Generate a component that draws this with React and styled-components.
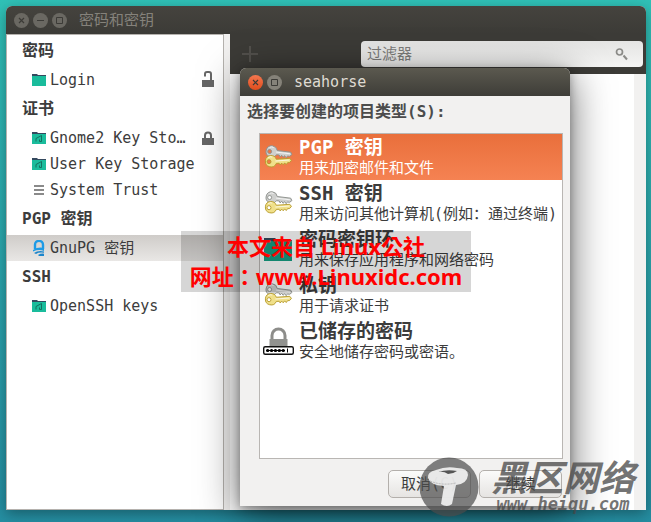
import React, { useState } from 'react'
import styled, { createGlobalStyle } from 'styled-components'

const sidebarGroups = [
    { title: '密码', items: [{ name: 'Login', icon: 'folder', lock: 'open' }] },
    {
        title: '证书',
        items: [
            { name: 'Gnome2 Key Storage', icon: 'home', lock: 'closed' },
            { name: 'User Key Storage', icon: 'home' },
            { name: 'System Trust', icon: 'lines' },
        ],
    },
    { title: 'PGP 密钥', items: [{ name: 'GnuPG 密钥', icon: 'gnupg' }] },
    { title: 'SSH', items: [{ name: 'OpenSSH keys', icon: 'home' }] },
]

const itemTypes = [
    { title: 'PGP 密钥', text: '用来加密邮件和文件', icon: 'keys' },
    { title: 'SSH 密钥', text: '用来访问其他计算机(例如：通过终端)', icon: 'keys' },
    { title: '密码密钥环', text: '用来保存应用程序和网络密码', icon: 'keyring' },
    { title: '私钥', text: '用于请求证书', icon: 'keys' },
    { title: '已储存的密码', text: '安全地储存密码或密语。', icon: 'stored' },
]

function SidebarIcon({ type }) {
    if (type === 'lines') {
        return (
            <svg width="16" height="16" viewBox="0 0 16 16">
                <path d="M3 3h10v2H3zM3 7h10v2H3zM3 11h10v2H3z" fill="#8a8a8a" />
            </svg>
        )
    }
    if (type === 'gnupg') {
        return (
            <svg width="16" height="16" viewBox="0 0 16 16">
                <path d="M4 9V4.800a4 4 0 0 1 8 0V9" fill="none" stroke="#1e9be6" strokeWidth="2.400" />
                <path d="M2 10Q7 6.500 13 8V11Q8 9 2 11.500z" fill="#1e9be6" />
                <path d="M3 13q4-2.800 10-1.500v1.300Q8 12 5 14zM7 15q3-1.800 6-1.300V16H8z" fill="#1c86cc" />
            </svg>
        )
    }
    return (
        <svg width="16" height="16" viewBox="0 0 16 16">
            <path d="M1 2h5l1 1h8v3H1z" fill="#34495e" />
            <path d="M1 4h14v10H1z" fill="#1abc9c" />
            {type === 'home' && (
                <path d="M5 11.500V8.500L10.500 5.500V11.500H8.500V9.500" fill="none" stroke="#13705f" strokeWidth="1" />
            )}
        </svg>
    )
}

function LockIcon({ open }) {
    return (
        <svg width="14" height="18" viewBox="0 0 14 18">
            <path d="M1 9h12v7H1z" fill="#666" />
            {open ? (
                <path d="M4 5.500V3Q4 1 6 1h2q2 0 2 2v6.500" fill="none" stroke="#666" strokeWidth="2" />
            ) : (
                <path d="M4 9.500V6.500a3 3 0 0 1 6 0V9.500" fill="none" stroke="#666" strokeWidth="2" />
            )}
        </svg>
    )
}

function Key({ fill, edge }) {
    return (
        <g fill={fill} stroke={edge} strokeWidth="0.900">
            <path
                fillRule="evenodd"
                d="M6.500 1a5.700 5.700 0 1 0 5.200 8.300H14.500l1 1.800 1.500-1.800 1.500 1.800 1.500-1.800 1.500 1.800 1.500-1.800H25l2-2-1.500-2.200H12A5.700 5.700 0 0 0 6.500 1zM4.500 5a2 2 0 1 1 0 4 2 2 0 0 1 0-4z"
            />
            <path d="M11 6.800h14" stroke="#fff" strokeOpacity="0.800" />
            <path d="M4 3q2-1.500 4-.4" stroke="#fff" strokeOpacity="0.800" fill="none" />
        </g>
    )
}

function TypeIcon({ type }) {
    if (type === 'keyring') {
        return (
            <svg width="32" height="32" viewBox="0 0 32 32">
                <path d="M2 5h11l2 2h15v5H2z" fill="#34495e" />
                <path d="M2 8h28v20H2z" fill="#16a085" />
            </svg>
        )
    }
    if (type === 'stored') {
        return (
            <svg width="32" height="32" viewBox="0 0 32 32">
                <path d="M10 15V10.500a6.500 6.500 0 0 1 13 0v4.500" fill="none" stroke="#8d8d8a" strokeWidth="3" />
                <path d="M7.500 14h18v8h-18z" fill="#91928f" />
                <rect x="1.700" y="21.700" width="29.600" height="7.600" rx="1.500" fill="#fff" stroke="#111" strokeWidth="1.400" />
                <path d="M5.500 25.500h18" stroke="#000" strokeWidth="3" strokeLinecap="round" strokeDasharray="0.300 3.600" />
                <path d="M4 25.500h19" stroke="#000" />
                <path d="M25.500 23.500v4" stroke="#000" />
            </svg>
        )
    }
    return (
        <svg width="32" height="32" viewBox="0 0 32 32">
            <g transform="translate(4 3) rotate(7)"><Key fill="#cfd0ce" edge="#8e918d" /></g>
            <g transform="translate(2 14) rotate(-4)"><Key fill="#f0e08a" edge="#b79b2c" /></g>
        </svg>
    )
}

function WindowIcon({ type }) {
    return (
        <svg width="7" height="7" viewBox="0 0 7 7" fill="none" stroke="currentColor">
            {type === 'close' && <path d="M1 1l5 5M6 1L1 6" strokeWidth="1.200" />}
            {type === 'min' && <path d="M0 3.500h7" />}
            {type === 'max' && <path d="M.5.5h6v6h-6z" />}
        </svg>
    )
}

export default function App() {
    const [place, setPlace] = useState('GnuPG 密钥')
    const [selected, setSelected] = useState(0)
    const [filter, setFilter] = useState('')

    return (
        <Desktop>
            <GlobalStyle />
            <MainWindow>
                <TitleBar>
                    <WindowButton aria-label="关闭"><WindowIcon type="close" /></WindowButton>
                    <WindowButton aria-label="最小化"><WindowIcon type="min" /></WindowButton>
                    <WindowButton aria-label="最大化"><WindowIcon type="max" /></WindowButton>
                    <WindowTitle>密码和密钥</WindowTitle>
                </TitleBar>
                <WindowBody>
                    <Sidebar>
                        {sidebarGroups.map((group) => (
                            <React.Fragment key={group.title}>
                                <GroupTitle>{group.title}</GroupTitle>
                                {group.items.map((item) => (
                                    <Place
                                        key={item.name}
                                        $active={place === item.name}
                                        onClick={() => setPlace(item.name)}
                                    >
                                        <SidebarIcon type={item.icon} />
                                        <PlaceName>{item.name}</PlaceName>
                                        {item.lock && (
                                            <LockSlot><LockIcon open={item.lock === 'open'} /></LockSlot>
                                        )}
                                    </Place>
                                ))}
                            </React.Fragment>
                        ))}
                    </Sidebar>
                    <Content>
                        <Toolbar>
                            <AddButton aria-label="添加">
                                <svg width="16" height="16" viewBox="0 0 16 16">
                                    <path d="M8 0v16M0 8h16" stroke="#53514d" strokeWidth="2" />
                                </svg>
                            </AddButton>
                            <SearchBox>
                                <SearchInput
                                    aria-label="过滤器"
                                    placeholder="过滤器"
                                    value={filter}
                                    onChange={(e) => setFilter(e.target.value)}
                                />
                                <svg width="16" height="16" viewBox="0 0 16 16" fill="none" stroke="#8b8b88">
                                    <circle cx="6.500" cy="6" r="3" strokeWidth="1.700" />
                                    <path d="M10.500 9.500l3.500 4" strokeWidth="2" />
                                </svg>
                            </SearchBox>
                        </Toolbar>
                        <KeyArea />
                    </Content>
                </WindowBody>
            </MainWindow>

            <Dialog role="dialog" aria-label="seahorse">
                <DialogBar>
                    <WindowButton $close aria-label="关闭"><WindowIcon type="close" /></WindowButton>
                    <WindowButton $light aria-label="最大化"><WindowIcon type="max" /></WindowButton>
                    <DialogTitle>seahorse</DialogTitle>
                </DialogBar>
                <DialogBody>
                    <DialogLabel>选择要创建的项目类型(S):</DialogLabel>
                    <TypeList>
                        {itemTypes.map((type, i) => (
                            <TypeRow key={type.title} $active={selected === i} onClick={() => setSelected(i)}>
                                <TypeIcon type={type.icon} />
                                <TypeInfo>
                                    <TypeTitle>{type.title}</TypeTitle>
                                    <TypeText>{type.text}</TypeText>
                                </TypeInfo>
                            </TypeRow>
                        ))}
                    </TypeList>
                    <DialogActions>
                        <ActionButton>取消(C)</ActionButton>
                        <ActionButton>继续</ActionButton>
                    </DialogActions>
                </DialogBody>
            </Dialog>

            <SourceNote>
                <span>本文来自 Linux公社</span>
                <span>网址：www.Linuxidc.com</span>
            </SourceNote>

            <SiteMark>
                <svg width="60" height="60" viewBox="0 0 60 60">
                    <circle cx="30" cy="30" r="29.500" fill="#4c4c4c" fillOpacity="0.700" />
                    <path
                        d="M9 21Q8 15 17 13Q27 9 38 11Q49 11 49 18Q48 27 37 28L33 47Q28 51 22 47L25 29Q11 28 9 21z"
                        fill="#f7f7f7"
                        fillOpacity="0.880"
                    />
                    <path d="M19 15q9-3 19-1q-4 3-9 3q-4-3-10-2z" fill="#555" />
                    <path d="M11 24q12 5 26 2" fill="none" stroke="#b5b5b5" strokeDasharray="2 1" />
                </svg>
                <SiteText>
                    <SiteName>黑区网络</SiteName>
                    <SiteUrl>www.heiqu.com</SiteUrl>
                </SiteText>
            </SiteMark>
        </Desktop>
    )
}

const GlobalStyle = createGlobalStyle`
* {
    box-sizing: border-box;
}
body {
    margin: 0;
}
body, button, input {
    font-family: "DejaVu Sans Mono", "Noto Sans CJK SC", monospace;
    font-size: 15px;
    color: #3c3c3c;
}
button {
    border: none;
    padding: 0;
    background: none;
}
svg {
    display: block;
    flex: none;
}
`
const Desktop = styled.div`
position: relative;
display: flex;
min-height: 100vh;
padding: 6px 5px 12px 6px;
overflow: hidden;
background: linear-gradient(#30c1b7, #2ba6ad 50%, #258ea2);
`
const MainWindow = styled.div`
flex: 1;
display: flex;
flex-direction: column;
border-radius: 6px 6px 0 0;
background-color: #f2f1f0;
box-shadow: 0 4px 14px rgba(0, 0, 0, 0.35);
`
const TitleBar = styled.header`
display: flex;
align-items: center;
gap: 4px;
height: 28px;
padding: 0 8px;
border-radius: 6px 6px 0 0;
background: linear-gradient(#45433e, #3c3b37);
`
const WindowButton = styled.button`
display: flex;
align-items: center;
justify-content: center;
width: 15px;
height: 15px;
border-radius: 50%;
color: #3c3b37;
background: ${(props) => (props.$close ? 'linear-gradient(#f4774f, #df4c1c)' : props.$light ? '#858279' : '#6a6862')};
`
const WindowTitle = styled.h1`
margin: 0 0 0 8px;
font-size: 15px;
font-weight: 400;
line-height: 28px;
color: #85827b;
`
const WindowBody = styled.div`
flex: 1;
display: flex;
`
const Sidebar = styled.nav`
display: flex;
flex-direction: column;
width: 218px;
margin-right: 6px;
border: 1px solid #b5b2ae;
background-color: #fff;
`
const GroupTitle = styled.h2`
margin: 0;
padding: 0 15px;
font-size: 16px;
font-weight: 700;
line-height: 32px;
`
const Place = styled.button`
display: flex;
align-items: center;
height: 26px;
padding: 0 8px 0 24px;
text-align: left;
background: ${(props) => (props.$active ? 'linear-gradient(#cfccc9, #e9e7e5)' : 'none')};
`
const PlaceName = styled.span`
flex: 1;
margin-left: 3px;
line-height: 26px;
white-space: nowrap;
overflow: hidden;
text-overflow: ellipsis;
`
const LockSlot = styled.span`
margin-left: 12px;
`
const Content = styled.main`
flex: 1;
display: flex;
flex-direction: column;
`
const Toolbar = styled.div`
display: flex;
align-items: center;
justify-content: space-between;
height: 40px;
padding: 0 3px 0 12px;
background-color: #3c3b37;
`
const AddButton = styled.button`
width: 16px;
height: 16px;
`
const SearchBox = styled.div`
display: flex;
align-items: center;
width: 282px;
height: 26px;
padding: 0 14px 0 6px;
border-radius: 4px;
background: linear-gradient(#e4e4e3, #f5f5f4);
`
const SearchInput = styled.input`
flex: 1;
min-width: 0;
padding: 0;
border: none;
outline: none;
background: none;
&::placeholder {
    color: #7d7d7b;
    opacity: 1;
}
`
const KeyArea = styled.div`
flex: 1;
margin-right: 12px;
background-color: #fff;
`
const Dialog = styled.section`
position: absolute;
left: 240px;
top: 68px;
width: 330px;
border-radius: 6px 6px 0 0;
background-color: #f2f1f0;
box-shadow: 0 8px 40px rgba(0, 0, 0, 0.6), 0 2px 10px rgba(0, 0, 0, 0.3);
`
const DialogBar = styled(TitleBar)`
background: linear-gradient(#5b594f, #3e3d38);
`
const DialogTitle = styled(WindowTitle)`
color: #dfdbd2;
`
const DialogBody = styled.div`
padding: 0 7px 8px;
`
const DialogLabel = styled.h2`
margin: 0;
font-size: 16px;
font-weight: 700;
line-height: 32px;
color: #4c4c4c;
`
const TypeList = styled.div`
display: flex;
flex-direction: column;
min-height: 326px;
margin: 5px 0 11px 12px;
border: 1px solid #b9b6b3;
background-color: #fff;
`
const TypeRow = styled.button`
display: flex;
align-items: center;
gap: 5px;
height: 46px;
padding: 0 2px;
text-align: left;
color: ${(props) => (props.$active ? '#fff' : '#3c3c3c')};
background: ${(props) => (props.$active ? 'linear-gradient(#e96f3b, #f58252)' : 'none')};
`
const TypeInfo = styled.span`
display: flex;
flex-direction: column;
padding-bottom: 2px;
`
const TypeTitle = styled.strong`
font-size: 19px;
line-height: 24px;
`
const TypeText = styled.span`
line-height: 18px;
white-space: nowrap;
`
const DialogActions = styled.div`
display: flex;
justify-content: flex-end;
gap: 8px;
padding-right: 1px;
`
const ActionButton = styled.button`
width: 83px;
height: 28px;
padding-bottom: 3px;
border: 1px solid #b3afab;
border-radius: 5px;
background: linear-gradient(#fbfbfa, #e6e4e2);
`
const SourceNote = styled.div`
position: absolute;
left: 181px;
top: 231px;
display: flex;
flex-direction: column;
align-items: center;
width: 290px;
height: 61px;
font-family: "Noto Sans", "Noto Sans CJK TC", sans-serif;
font-size: 22px;
font-weight: 700;
line-height: 30px;
white-space: nowrap;
color: #f00;
background-color: rgba(0, 0, 0, 0.16);
`
const SiteMark = styled.div`
position: absolute;
right: 16px;
bottom: 5px;
display: flex;
gap: 12px;
color: rgba(70, 70, 70, 0.75);
`
const SiteText = styled.div`
display: flex;
flex-direction: column;
align-items: center;
padding-top: 4px;
font-style: italic;
font-weight: 700;
white-space: nowrap;
`
const SiteName = styled.span`
font-size: 36px;
line-height: 36px;
`
const SiteUrl = styled.span`
font-size: 17px;
line-height: 14px;
`
